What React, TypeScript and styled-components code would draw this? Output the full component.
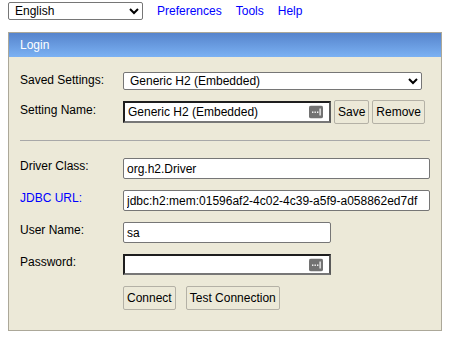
import React from "react";
import styled, { createGlobalStyle } from "styled-components";

const GlobalStyle = createGlobalStyle`
	body {
		margin: 0;
		background: #fff;
		font-family: "Liberation Sans", Arial, sans-serif;
		font-size: 12px;
		color: #000;
	}
`;

const Page = styled.div`
	padding: 2px 8px 0 8px;
`;

const TopBar = styled.div`
	display: flex;
	align-items: center;
	gap: 14px;
	height: 18px;
`;

const LangSelect = styled.select`
	width: 135px;
	height: 18px;
	margin: 0;
	padding: 0 0 0 2px;
	font: 12px "Liberation Sans", Arial, sans-serif;
	color: #000;
	background: #fff;
	border: 1px solid #767676;
	border-radius: 2px;
`;

const TopLink = styled.a`
	color: #0000ff;
	text-decoration: none;
	font-size: 12px;
	cursor: pointer;
`;

const Panel = styled.div`
	margin-top: 12px;
	width: 434px;
	box-sizing: border-box;
	border: 1px solid #aca899;
	background: #ece9d8;
`;

const PanelHeader = styled.div`
	height: 24px;
	line-height: 24px;
	padding-left: 11px;
	color: #fff;
	background: linear-gradient(#5684cc, #7bb1f3);
`;

const PanelBody = styled.div`
	padding: 0 11px 20px 11px;
`;

const Row = styled.div<{ $top: number }>`
	display: grid;
	grid-template-columns: 103px 1fr;
	align-items: start;
	justify-items: start;
	margin-top: ${(p) => p.$top}px;
`;

const Label = styled.div<{ $link?: boolean; $pad?: number }>`
	padding-top: ${(p) => p.$pad ?? 1}px;
	color: ${(p) => (p.$link ? "#0000ff" : "#000")};
	white-space: nowrap;
`;

const Field = styled.div`
	display: flex;
	align-items: center;
	gap: 3px;
`;

const Select = styled.select`
	width: 299px;
	height: 18px;
	padding: 0 0 0 2px;
	font: 12px "Liberation Sans", Arial, sans-serif;
	color: #000;
	background: #fff;
	border: 1px solid #767676;
	border-radius: 2px;
`;

const Input = styled.input<{ $width: number }>`
	box-sizing: border-box;
	width: ${(p) => p.$width}px;
	height: 21px;
	padding: 0 3px;
	font: 12px "Liberation Sans", Arial, sans-serif;
	color: #000;
	background: #fff;
	border: 1px solid #767676;
	border-radius: 2px;
	outline: none;
`;

const KeyInput = styled(Input)<{ $tall?: boolean }>`
	height: ${(p) => (p.$tall ? 22 : 21)}px;
	border-width: 2px;
	border-style: solid;
	border-color: #1e1e1e #5a5a5a #777 #1e1e1e;
	border-radius: 0;
	padding-right: 24px;
`;

const KeyWrap = styled.div`
	position: relative;
	display: inline-flex;
	justify-self: start;
`;

const KeyIcon = styled.svg`
	position: absolute;
	right: 8px;
	top: 50%;
	transform: translateY(-50%);
`;

const Button = styled.button`
	height: 24px;
	padding: 0 3px;
	font: 12px "Liberation Sans", Arial, sans-serif;
	color: #000;
	background: #ece9d8;
	border: 1px solid #b4b1a6;
	border-radius: 2px;
	cursor: pointer;
`;

const ButtonRow = styled.div`
	display: flex;
	gap: 10px;
`;

const Rule = styled.div`
	margin-top: 16px;
	height: 1px;
	background: #a8a8a8;
`;

const KeyGlyph = () => (
	<KeyIcon width="14" height="13" viewBox="0 0 14 13">
		<rect x="0" y="0" width="14" height="13" rx="2" fill="#727272" />
		<rect x="3" y="6" width="1.4" height="1.4" fill="#fff" />
		<rect x="5.5" y="6" width="1.4" height="1.4" fill="#fff" />
		<rect x="8" y="6" width="1.4" height="1.4" fill="#fff" />
		<rect x="10.5" y="3" width="1.2" height="7" fill="#fff" />
	</KeyIcon>
);

const App: React.FC = () => {
	return (
		<Page>
			<GlobalStyle />
			<TopBar>
				<LangSelect defaultValue="en">
					<option value="en">English</option>
				</LangSelect>
				<TopLink>Preferences</TopLink>
				<TopLink>Tools</TopLink>
				<TopLink>Help</TopLink>
			</TopBar>

			<Panel>
				<PanelHeader>Login</PanelHeader>
				<PanelBody>
					{/* saved settings */}
					<Row $top={15}>
						<Label>Saved Settings:</Label>
						<Select defaultValue="h2emb">
							<option value="h2emb">Generic H2 (Embedded)</option>
						</Select>
					</Row>
					<Row $top={10}>
						<Label $pad={3}>Setting Name:</Label>
						<Field>
							<KeyWrap>
								<KeyInput $width={208} $tall defaultValue="Generic H2 (Embedded)" />
								<KeyGlyph />
							</KeyWrap>
							<Button>Save</Button>
							<Button>Remove</Button>
						</Field>
					</Row>

					<Rule />

					{/* connection */}
					<Row $top={17}>
						<Label>Driver Class:</Label>
						<Input $width={307} defaultValue="org.h2.Driver" />
					</Row>
					<Row $top={11}>
						<Label $link>JDBC URL:</Label>
						<Input $width={307} defaultValue="jdbc:h2:mem:01596af2-4c02-4c39-a5f9-a058862ed7df" />
					</Row>
					<Row $top={11}>
						<Label>User Name:</Label>
						<Input $width={208} defaultValue="sa" />
					</Row>
					<Row $top={11}>
						<Label>Password:</Label>
						<KeyWrap>
							<KeyInput $width={208} type="password" />
							<KeyGlyph />
						</KeyWrap>
					</Row>
					<Row $top={11}>
						<div />
						<ButtonRow>
							<Button>Connect</Button>
							<Button>Test Connection</Button>
						</ButtonRow>
					</Row>
				</PanelBody>
			</Panel>
		</Page>
	);
};

export default App;
